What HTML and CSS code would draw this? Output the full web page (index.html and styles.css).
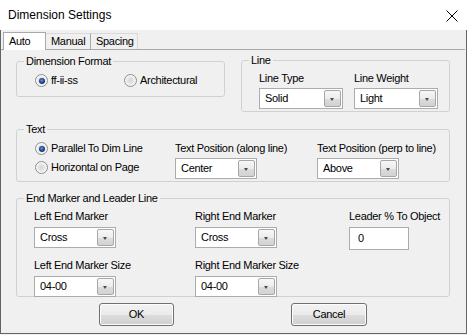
FILE: index.html
```html
<!DOCTYPE html>
<html>
<head>
<meta charset="utf-8">
<link rel="stylesheet" href="styles.css">
</head>
<body>
<div class="window">
  <div class="titlebar">
    <span class="title">Dimension Settings</span>
    <svg class="close" width="12" height="12" viewBox="0 0 12 12"><path d="M0.5 0.5 L11.5 11.5 M11.5 0.5 L0.5 11.5" stroke="#000" stroke-width="1" fill="none"/></svg>
  </div>
  <div class="tabs">
    <div class="tab active">Auto</div>
    <div class="tab">Manual</div>
    <div class="tab">Spacing</div>
  </div>
  <div class="page">
    <div class="row1">
      <div class="group g-format">
        <span class="legend">Dimension Format</span>
        <div class="format-row">
          <div class="radio-item r1"><span class="radio on"></span><span>ff-ii-ss</span></div>
          <div class="radio-item"><span class="radio"></span><span>Architectural</span></div>
        </div>
      </div>
      <div class="group g-line">
        <span class="legend">Line</span>
        <div class="line-grid">
          <div class="field">
            <div class="lbl">Line Type</div>
            <div class="combo w85"><span>Solid</span><span class="cbtn"></span></div>
          </div>
          <div class="field">
            <div class="lbl">Line Weight</div>
            <div class="combo w84"><span>Light</span><span class="cbtn"></span></div>
          </div>
        </div>
      </div>
    </div>
    <div class="group g-text">
      <span class="legend">Text</span>
      <div class="text-grid">
        <div class="radio-col">
          <div class="radio-item"><span class="radio on"></span><span>Parallel To Dim Line</span></div>
          <div class="radio-item"><span class="radio"></span><span>Horizontal on Page</span></div>
        </div>
        <div class="field">
          <div class="lbl">Text Position (along line)</div>
          <div class="combo"><span>Center</span><span class="cbtn"></span></div>
        </div>
        <div class="field">
          <div class="lbl">Text Position (perp to line)</div>
          <div class="combo"><span>Above</span><span class="cbtn"></span></div>
        </div>
      </div>
    </div>
    <div class="group g-end">
      <span class="legend">End Marker and Leader Line</span>
      <div class="end-grid">
        <div class="field">
          <div class="lbl">Left End Marker</div>
          <div class="combo"><span>Cross</span><span class="cbtn"></span></div>
        </div>
        <div class="field">
          <div class="lbl">Right End Marker</div>
          <div class="combo"><span>Cross</span><span class="cbtn"></span></div>
        </div>
        <div class="field">
          <div class="lbl">Leader % To Object</div>
          <div class="textbox">0</div>
        </div>
        <div class="field">
          <div class="lbl">Left End Marker Size</div>
          <div class="combo"><span>04-00</span><span class="cbtn"></span></div>
        </div>
        <div class="field">
          <div class="lbl">Right End Marker Size</div>
          <div class="combo"><span>04-00</span><span class="cbtn"></span></div>
        </div>
      </div>
    </div>
  </div>
  <div class="buttons">
    <div class="btn ok">OK</div>
    <div class="btn cancel">Cancel</div>
  </div>
</div>
</body>
</html>
```
FILE: styles.css
```css
* { box-sizing: border-box; }
html, body {
  margin: 0;
  padding: 0;
  background: #f0f0f0;
}
body {
  font-family: "Liberation Sans", Arial, sans-serif;
  font-size: 11px;
  line-height: 13px;
  letter-spacing: -0.3px;
  color: #000;
}
.window {
  width: 467px;
  height: 334px;
  background: #f0f0f0;
  border: 1px solid #646464;
  border-top: none;
}
.titlebar {
  height: 30px;
  background: #fff;
  display: flex;
  align-items: center;
  justify-content: space-between;
  padding-left: 8px;
  padding-right: 9px;
  margin: 0 -1px 0 -1px;
}
.title {
  font-size: 12px;
  letter-spacing: 0;
  color: #000;
  padding-top: 1px;
}
.close { display: block; margin-top: 2px; }

.tabs {
  height: 19px;
  display: flex;
  align-items: flex-end;
  padding-left: 2px;
  position: relative;
  z-index: 1;
}
.tab {
  height: 16px;
  padding: 1px 0 0 5px;
  border-right: 1px solid #a9a9a9;
  border-top: 1px solid #d9d9d9;
}
.tab:nth-child(2) { width: 45px; }
.tab:nth-child(3) { width: 47px; border-right-color: #d9d9d9; }
.tab.active {
  width: 43px;
  height: 18px;
  margin-bottom: -1px;
  background: #fff;
  border: 1px solid #a9a9a9;
  border-bottom: none;
  padding-top: 2px;
}
.page {
  border-top: 1px solid #a9a9a9;
  margin-right: 1px;
  padding: 0 15px 0 15px;
}
.row1 {
  display: flex;
  align-items: flex-start;
  gap: 16px;
  margin-top: 10px;
}
.group {
  position: relative;
  border: 1px solid #cfd2d4;
  border-radius: 3px;
}
.legend {
  position: absolute;
  top: -7px;
  left: 7px;
  padding: 0 2px;
  background: #f0f0f0;
  white-space: nowrap;
}
.g-format {
  width: 209px;
  height: 36px;
  margin-top: 1px;
  padding: 12px 0 0 18px;
}
.format-row { display: flex; }
.format-row .r1 { width: 89px; }
.g-line {
  width: 209px;
  height: 52px;
  padding: 11px 0 0 17px;
}
.line-grid {
  display: grid;
  grid-template-columns: 95px auto;
}
.field { display: flex; flex-direction: column; }
.lbl { height: 13px; white-space: nowrap; }
.g-line .lbl { margin-bottom: 3px; }
.g-text .lbl { margin-bottom: 3px; }
.g-end .lbl { margin-bottom: 4px; }

.radio-item {
  display: flex;
  align-items: center;
  gap: 3px;
  height: 13px;
  white-space: nowrap;
}
.radio {
  width: 13px;
  height: 13px;
  border-radius: 50%;
  border: 1px solid #8f8f8f;
  background: radial-gradient(circle at 50% 50%, #d6d6d6 0, #e4e4e4 3px, #f6f6f6 5px);
  position: relative;
  flex: none;
}
.radio.on::after {
  content: "";
  position: absolute;
  left: 2.5px;
  top: 2.5px;
  width: 6px;
  height: 6px;
  border-radius: 50%;
  background: radial-gradient(circle at 45% 40%, #7ea6e0 0, #2c5aa5 1.5px, #1a3a78 3px);
}

.g-text {
  margin-top: 17px;
  height: 53px;
  padding: 12px 0 0 18px;
}
.text-grid {
  display: grid;
  grid-template-columns: 140px 142px auto;
}
.radio-col { display: flex; flex-direction: column; gap: 6px; }

.g-end {
  margin-top: 16px;
  height: 99px;
  padding: 11px 0 0 17px;
}
.end-grid {
  display: grid;
  grid-template-columns: 161px 154px auto;
  row-gap: 9px;
}

.combo {
  width: 82px;
  height: 21px;
  background: #fff;
  border: 1px solid #acacac;
  display: flex;
  align-items: center;
  justify-content: space-between;
  padding: 0 1px 0 5px;
}
.combo.w85 { width: 84px; }
.combo.w84 { width: 84px; }
.cbtn {
  width: 17px;
  height: 17px;
  border: 1px solid #a7a7a7;
  border-radius: 2px;
  background: linear-gradient(#f7f7f7, #ececec 50%, #dcdcdc 51%, #d2d2d2);
  position: relative;
}
.cbtn::after {
  content: "";
  position: absolute;
  left: 5px;
  top: 7px;
  border-left: 2.5px solid transparent;
  border-right: 2.5px solid transparent;
  border-top: 3px solid #4a4a4a;
}
.textbox {
  width: 60px;
  height: 23px;
  background: #fff;
  border: 1px solid #acacac;
  padding: 4px 0 0 8px;
}

.buttons {
  display: flex;
  margin-top: 6px;
  padding-left: 98px;
  gap: 117px;
}
.btn {
  height: 23px;
  border: 1px solid #707070;
  border-radius: 3px;
  background: linear-gradient(#f2f2f2, #ebebeb 50%, #dddddd 51%, #cfcfcf);
  box-shadow: inset 0 0 0 1px #fcfcfc;
  display: flex;
  align-items: center;
  justify-content: center;
}
.btn.ok { width: 75px; }
.btn.cancel { width: 76px; }
```
